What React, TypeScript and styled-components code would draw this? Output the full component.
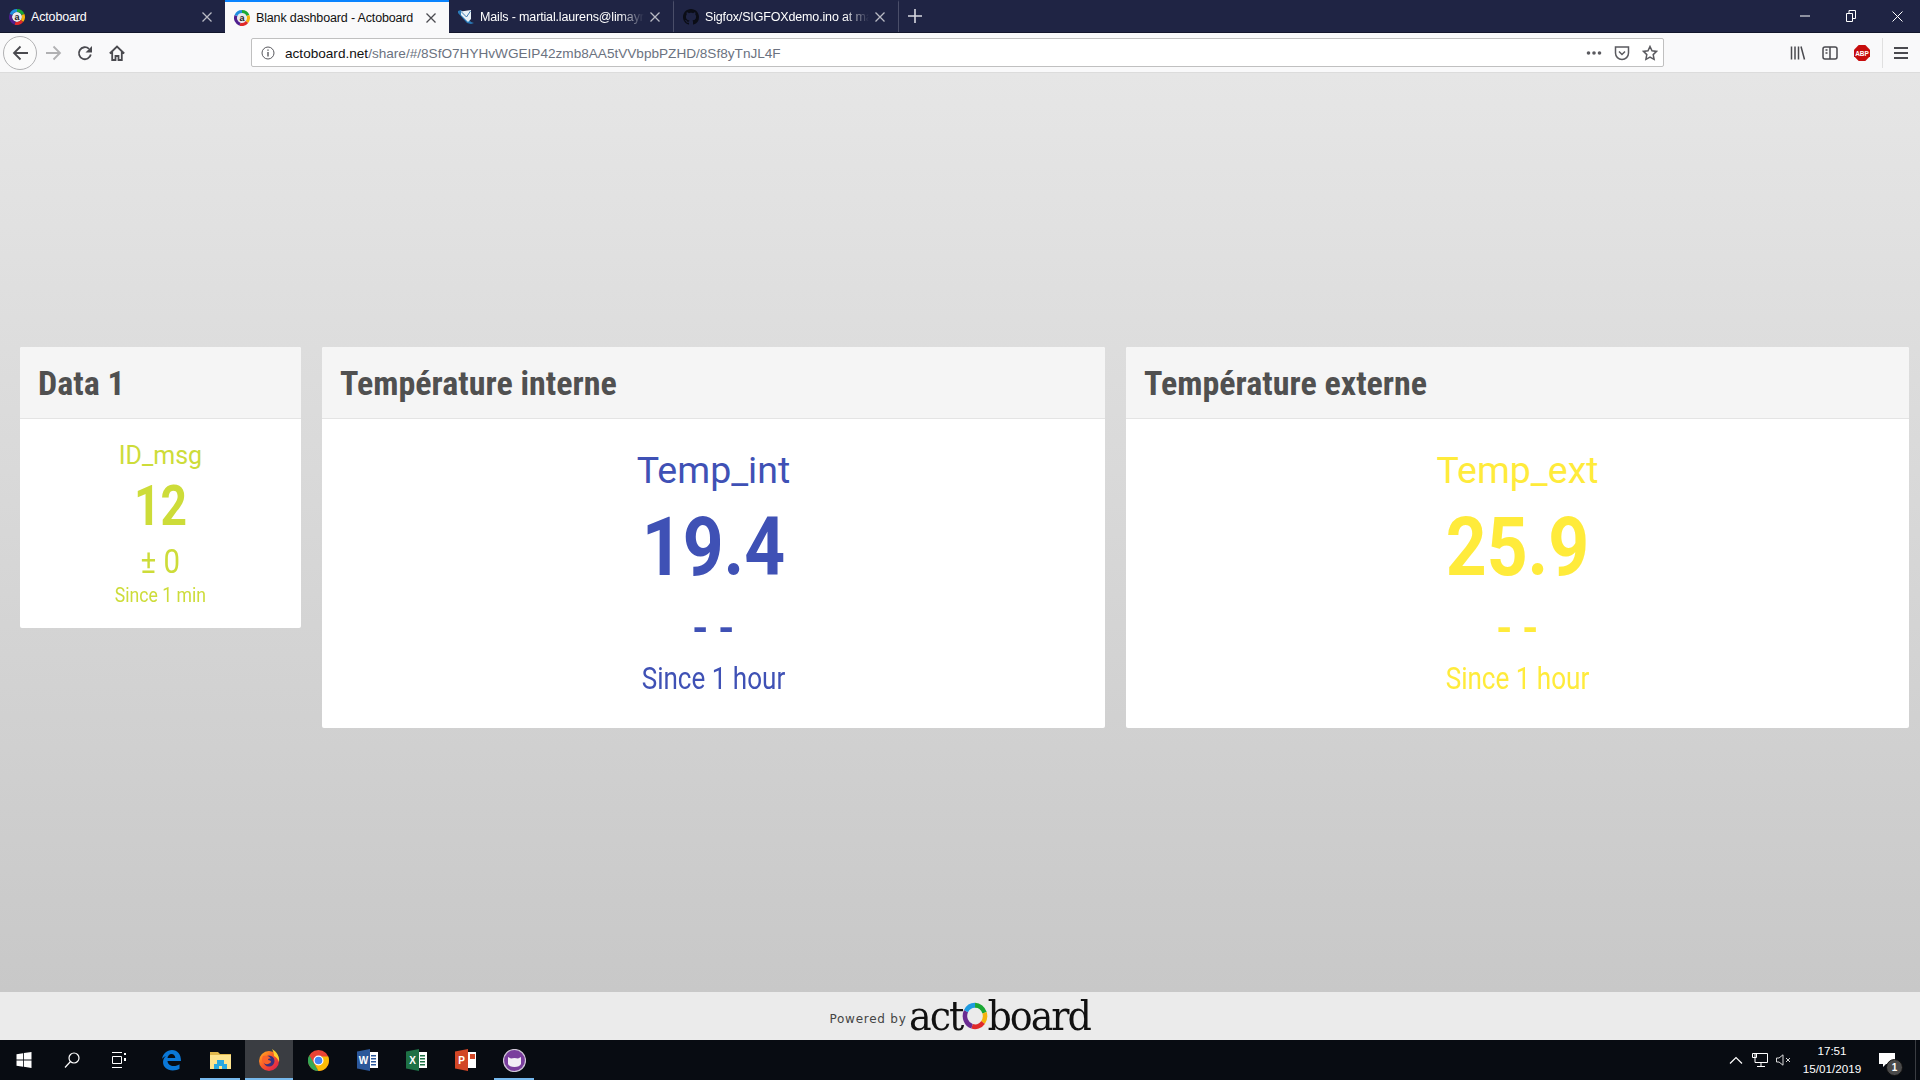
import React from 'react';
import styled, { createGlobalStyle } from 'styled-components';

const Global = createGlobalStyle`
  html, body { margin: 0; padding: 0; height: 1080px; overflow: hidden; }
  #root { height: 1080px; }
  * { box-sizing: border-box; }
`;

const Screen = styled.div`
  width: 1920px; height: 1080px; display: flex; flex-direction: column;
  font-family: Roboto, "Liberation Sans", sans-serif; overflow: hidden;
`;

/* ---------- browser chrome ---------- */
const TabStrip = styled.div`
  height: 33px; flex: none; background: #1f2444; display: flex; align-items: stretch;
  border-bottom: 1px solid #12162c;
`;
const Tab = styled.div<{ $active?: boolean; $w: number; $sep?: boolean }>`
  width: ${p => p.$w}px; flex: none; display: flex; align-items: center; padding: 0 8px 0 9px;
  gap: 6px; font-size: 12.5px; letter-spacing: -0.15px; white-space: nowrap; overflow: hidden;
  font-family: "Liberation Sans", sans-serif;
  color: ${p => (p.$active ? '#111' : '#fff')};
  background: ${p => (p.$active ? '#f9f9fa' : 'transparent')};
  border-top: 2px solid ${p => (p.$active ? '#0a84ff' : 'transparent')};
  border-right: ${p => (p.$sep ? '1px solid #4a4e69' : 'none')};
  height: ${p => (p.$active ? '33px' : '32px')};
`;
const TabLabel = styled.span<{ $fade?: boolean }>`
  flex: 1; overflow: hidden; min-width: 0;
  ${p => p.$fade && 'mask-image: linear-gradient(to right, #000 85%, transparent);'}
`;
const FavSvg = styled.svg`
  flex: none;
`;
const CloseSvg = styled.svg`
  flex: none; margin-right: 5px;
`;
const NewTab = styled.div`
  width: 32px; display: flex; align-items: center; justify-content: center; margin-right: auto;
`;
const WinButtons = styled.div`
  display: flex; align-items: center;
`;
const WinBtn = styled.div`
  width: 46px; height: 32px; display: flex; align-items: center; justify-content: center;
`;

const Toolbar = styled.div`
  height: 40px; flex: none; background: #f9f9fa; display: flex; align-items: center;
  border-bottom: 1px solid #dcdcdc;
`;
const BackCircle = styled.div`
  width: 34px; height: 34px; margin-left: 3px; border-radius: 50%; border: 1px solid #b1b1b3;
  background: #fbfbfb; display: flex; align-items: center; justify-content: center; flex: none;
`;
const NavIcon = styled.div<{ $ml: number }>`
  margin-left: ${p => p.$ml}px; width: 18px; height: 18px; flex: none; display: flex;
  align-items: center; justify-content: center;
`;
const UrlBar = styled.div`
  margin-left: 125px; width: 1413px; height: 29px; flex: none; background: #fff;
  border: 1px solid #c0c0c0; border-radius: 2px; display: flex; align-items: center;
  padding: 1px 5px 0 9px; font-family: "Liberation Sans", sans-serif; font-size: 13.6px;
`;
const UrlHost = styled.span`
  color: #111; margin-left: 10px;
`;
const UrlPath = styled.span`
  color: #6b7280; flex: 1;
`;
const UrlIcons = styled.div`
  display: flex; align-items: center; gap: 12px;
`;
const RightTools = styled.div`
  display: flex; align-items: center; flex: 1; padding-left: 125px;
`;
const ToolSlot = styled.div`
  width: 18px; height: 18px; margin-right: 14px; display: flex; align-items: center; justify-content: center; flex: none;
`;
const ToolDivider = styled.div`
  width: 1px; height: 30px; background: #e0e0e0; margin: 0 9px 0 -3px; flex: none;
`;

/* ---------- dashboard ---------- */
const Page = styled.main`
  flex: 1; min-height: 0; background: linear-gradient(to bottom, #e6e6e6, #c8c8c8);
  padding: 274px 11px 0 20px; display: flex; align-items: flex-start; gap: 21px;
`;
const Card = styled.section<{ $w: number; $h: number }>`
  width: ${p => p.$w}px; height: ${p => p.$h}px; flex: none; background: #fff; border-radius: 2px;
  overflow: hidden; display: flex; flex-direction: column;
`;
const CardHead = styled.header`
  height: 72px; flex: none; background: #f5f5f5; border-bottom: 1px solid #e4e4e4;
  display: flex; align-items: center; padding-left: 18px;
`;
const CardTitle = styled.h2`
  margin: 0; font-family: Roboto, sans-serif; font-stretch: condensed;
  font-weight: 700; font-size: 34px; color: #505050; white-space: nowrap;
`;
const CardBody = styled.div<{ $color: string }>`
  flex: 1; display: flex; flex-direction: column; align-items: center; color: ${p => p.$color};
`;
const Line = styled.div<{ $size: number; $top: number; $sx?: number; $weight?: number }>`
  font-size: ${p => p.$size}px; line-height: 1; margin-top: ${p => p.$top}px;
  font-weight: ${p => p.$weight ?? 400}; transform: scaleX(${p => p.$sx ?? 1}); white-space: pre;
`;

/* ---------- footer ---------- */
const Footer = styled.footer`
  height: 48px; flex: none; background: #ebebeb; display: flex; align-items: center; justify-content: center; gap: 2px;
`;
const Powered = styled.span`
  font-family: "DejaVu Sans", sans-serif; font-size: 12px; letter-spacing: 0.75px; color: #444; margin-top: 6px;
`;
const Logo = styled.span`
  font-family: "DejaVu Serif", "Liberation Serif", serif; font-size: 41px; color: #111; letter-spacing: -2.2px;
  display: inline-flex; align-items: baseline; line-height: 1; transform: scaleX(0.93); transform-origin: left center; width: 182px;
`;
const LogoRing = styled.svg`
  width: 28px; height: 28px; margin: 0 -1px -2px 0; flex: none;
`;

/* ---------- taskbar ---------- */
const Taskbar = styled.div`
  height: 40px; flex: none; background: #080c12; display: flex; align-items: stretch; color: #fff;
`;
const TaskItem = styled.div<{ $active?: boolean; $open?: boolean; $after?: number }>`
  width: 48px; margin-right: ${p => p.$after ?? 1}px; flex: none; display: flex; align-items: center; justify-content: center;
  position: relative; background: ${p => (p.$active ? '#3a3d42' : 'transparent')};
  &::after {
    content: ''; position: absolute; bottom: 0; height: 2px; background: #76b9ed;
    left: ${p => (p.$active ? 0 : 4)}px; right: ${p => (p.$active ? 0 : 4)}px;
    display: ${p => (p.$open ? 'block' : 'none')};
  }
`;
const Tray = styled.div`
  margin-left: auto; display: flex; align-items: center;
`;
const TrayIcon = styled.svg<{ $mr?: number }>`
  margin-right: ${p => p.$mr ?? 0}px; flex: none;
`;
const Clock = styled.div`
  width: 62px; margin-left: 10px; text-align: center; font-family: "Liberation Sans", sans-serif;
  font-size: 11.7px; line-height: 18px; color: #fff; white-space: nowrap;
`;
const Notif = styled.div`
  width: 44px; height: 40px; position: relative; display: flex; align-items: center; justify-content: center; margin: 0 6px 0 2px;
`;
const NotifBadge = styled.span`
  position: absolute; left: 21px; top: 19px; width: 17px; height: 17px; border-radius: 50%;
  background: #4a4a4a; border: 1px solid #111; color: #fff; font-size: 10px; font-weight: 700;
  display: flex; align-items: center; justify-content: center; font-family: "Liberation Sans", sans-serif;
`;
const CornerEdge = styled.div`
  width: 1px; align-self: stretch; background: #3a3d42; margin-right: 4px;
`;

const Ring = ({ size = 16 }: { size?: number }) => (
  <FavSvg width={size} height={size} viewBox="0 0 16 16">
    <circle cx="8" cy="8" r="5" fill="#e8e8ee" />
    <g fill="none" strokeWidth="3">
      <path d="M8 1.500A6.500 6.500 0 0 1 14 5.500" stroke="#1aa834" />
      <path d="M14 5.500A6.500 6.500 0 0 1 13 12" stroke="#f4b30c" />
      <path d="M13 12A6.500 6.500 0 0 1 6 14.200" stroke="#e02a2a" />
      <path d="M6 14.200A6.500 6.500 0 0 1 2 5.500" stroke="#4f1f8f" />
      <path d="M2 5.500A6.500 6.500 0 0 1 8 1.500" stroke="#1f8fe0" />
    </g>
    <text x="8" y="11" textAnchor="middle" fontSize="9" fontFamily="Liberation Sans" fontWeight="700" fill="#222">a</text>
  </FavSvg>
);
const Close = ({ c }: { c: string }) => (
  <CloseSvg width="10" height="10" viewBox="0 0 10 10">
    <path d="M.5.5l9 9M9.500.5l-9 9" stroke={c} strokeWidth="1.300" />
  </CloseSvg>
);
const MailIcon = () => (
  <FavSvg width="16" height="16" viewBox="0 0 16 16">
    <path d="M0 2l3-1 10 12 3 1-3 1-4-1L0 4z" fill="#2a7ab8" />
    <path d="M3 2.500l10-1.500v9l-3 3-7-7z" fill="#e8f1f7" />
    <path d="M3.500 3l5 5 4-6" fill="none" stroke="#2a6ea8" strokeWidth=".9" />
  </FavSvg>
);
const GithubIcon = () => (
  <FavSvg width="16" height="16" viewBox="0 0 16 16">
    <path fill="#0b0d16" d="M8 0C3.580 0 0 3.580 0 8c0 3.540 2.290 6.530 5.470 7.590.4.070.55-.17.55-.38 0-.19-.01-.82-.01-1.490-2.010.37-2.530-.49-2.690-.94-.09-.23-.48-.94-.82-1.130-.28-.15-.68-.52-.01-.53.63-.01 1.080.58 1.230.82.720 1.210 1.870.87 2.330.66.070-.52.28-.87.51-1.070-1.780-.2-3.640-.89-3.640-3.950 0-.87.31-1.590.82-2.150-.08-.2-.36-1.020.08-2.120 0 0 .67-.21 2.200.82.64-.18 1.320-.27 2-.27s1.360.09 2 .27c1.530-1.040 2.200-.82 2.200-.82.44 1.100.16 1.920.08 2.120.51.56.82 1.270.82 2.150 0 3.070-1.870 3.750-3.650 3.950.29.25.54.73.54 1.480 0 1.070-.01 1.930-.01 2.200 0 .21.15.46.55.38A8.010 8.010 0 0 0 16 8c0-4.420-3.580-8-8-8z" />
  </FavSvg>
);

const g = { fill: 'none', stroke: '#4a4a4f', strokeWidth: 1.8 } as const;

const Windows = () => (
  <svg width="16" height="16" viewBox="0 0 15 16"><path fill="#fff" d="M0 2.200 6.600 1.200V7.500H0zM7.400 1.100 15 0v7.500H7.400zM0 8.400h6.600v6.300L0 13.800zM7.400 8.400H15V16l-7.600-1.200z" /></svg>
);
const SearchI = () => (
  <svg width="16" height="17" viewBox="0 0 16 17" fill="none" stroke="#fff" strokeWidth="1.200"><circle cx="10" cy="6" r="5" /><path d="M6.500 9.500 1 15.500" /></svg>
);
const TaskView = () => (
  <svg width="16" height="16" viewBox="0 0 16 16" fill="none" stroke="#fff" strokeWidth="1"><path d="M0 .5h10M0 15.500h10M.5 4.500h9v7h-9z" /><path d="M13 1v2M13 6v3" strokeWidth="2" /></svg>
);
const Edge = () => (
  <svg width="20" height="21" viewBox="0 0 20 21"><path fill="#0a78d7" d="M1 9C2 3.500 6 0 11 0c5.500 0 9 4 9 11H6.500c.3 3.500 3 5 6 5 2.500 0 4.500-.8 6-1.800v4.600c-1.800 1-4 1.600-6.800 1.600-5.700 0-9.700-3.500-9.700-8.400C2 10 3 7.500 5 6 3.500 6.500 2 7.500 1 9zM6.500 8h7.800c0-2.200-1.500-4-3.800-4C8.300 4 6.800 5.800 6.500 8z" /></svg>
);
const Folder = () => (
  <svg width="21" height="19" viewBox="0 0 21 19"><path fill="#e0b84c" d="M0 1h8l2 2h11v15H0z" /><path fill="#fde48e" d="M0 4h21v14H0z" /><path fill="#29a8e0" d="M4 18v-5h3V9h7v4h3v5h-5v-3H9v3z" /></svg>
);
const Firefox = () => (
  <svg width="22" height="22" viewBox="0 0 22 22"><defs><linearGradient id="ff" x1="0" y1="0" x2="1" y2="1"><stop offset="0" stopColor="#ffb81e" /><stop offset=".5" stopColor="#f9522a" /><stop offset="1" stopColor="#d4145a" /></linearGradient></defs><circle cx="11" cy="12" r="10" fill="url(#ff)" /><path fill="#ffcf2e" d="M14 0c5 3 8 8 7 13-1-3-3-5-5-6 0-3-1-5-2-7z" /><circle cx="11" cy="12" r="5.500" fill="#39307e" /><path fill="#f9622a" d="M5 7c3-1 7 0 8 3-2-1-3 0-3 1 2 0 3 1 3 2-2 3-7 3-9-1 0-2 0-3 1-5z" /></svg>
);
const Chrome = () => (
  <svg width="21" height="21" viewBox="0 0 21 21"><circle cx="10.500" cy="10.500" r="10.500" fill="#ea4335" /><path fill="#34a853" d="M1.400 5.200 6 13.500l4.500 7.500A10.500 10.500 0 0 1 1.400 5.200z" /><path fill="#fbbc05" d="M20.300 6.500H10.500l-4 7 4 7.500c6 0 10.500-4.700 10.500-10.500 0-1.400-.3-2.800-.7-4z" /><circle cx="10.500" cy="10.500" r="5" fill="#fff" /><circle cx="10.500" cy="10.500" r="3.800" fill="#4285f4" /></svg>
);
const Office = ({ bg, letter, pageLines }: { bg: string; letter: string; pageLines?: boolean }) => (
  <svg width="21" height="22" viewBox="0 0 21 22">
    <rect x="7" y="3" width="14" height="16" fill="#fff" />
    {pageLines !== false && [6, 9, 12, 15].map(y => <rect key={y} x="14" y={y} width="5" height="1.500" fill={bg} />)}
    {pageLines === false && <path fill={bg} d="M15 5h5v5h-5z" />}
    <path fill={bg} d="M0 2.500 13 0v22L0 19.500z" />
    <text x="6.500" y="15" textAnchor="middle" fill="#fff" fontSize="10" fontWeight="700" fontFamily="Liberation Sans">{letter}</text>
  </svg>
);
const CatApp = () => (
  <svg width="23" height="23" viewBox="0 0 23 23"><circle cx="11.500" cy="11.500" r="11" fill="#7a3e9d" stroke="#cfc6d6" strokeWidth="1.200" /><path fill="#f2eef5" d="M5 8l3 1.500c2-.7 5-.7 7 0L18 8v7c-1 2-3 3-6.500 3S6 17 5 15z" /></svg>
);

const SMALL = {
  label: { $size: 25, $top: 24 },
  value: { $size: 55, $top: 11, $sx: 0.84, $weight: 700 },
  delta: { $size: 33, $top: 11, $sx: 0.89 },
  since: { $size: 21, $top: 7, $sx: 0.84 },
};
const LARGE = {
  label: { $size: 37.5, $top: 33 },
  value: { $size: 82, $top: 16, $sx: 0.87, $weight: 700 },
  delta: { $size: 50, $top: 15, $sx: 0.88, $weight: 500 },
  since: { $size: 31, $top: 10, $sx: 0.84 },
};

function Dash({ title, w, h, color, label, value, delta, since, large }: {
  title: string; w: number; h: number; color: string; label: string; value: string; delta: string; since: string; large?: boolean;
}) {
  const s = large ? LARGE : SMALL;
  return (
    <Card $w={w} $h={h}>
      <CardHead><CardTitle>{title}</CardTitle></CardHead>
      <CardBody $color={color}>
        <Line {...s.label}>{label}</Line>
        <Line {...s.value}>{value}</Line>
        <Line {...s.delta}>{delta}</Line>
        <Line {...s.since}>{since}</Line>
      </CardBody>
    </Card>
  );
}

export default function App() {
  return (
    <Screen>
      <Global />
      <TabStrip>
        <Tab $w={225}><Ring /><TabLabel>Actoboard</TabLabel><Close c="#b9bac4" /></Tab>
        <Tab $w={224} $active><Ring /><TabLabel>Blank dashboard - Actoboard</TabLabel><Close c="#4a4a4f" /></Tab>
        <Tab $w={225} $sep><MailIcon /><TabLabel $fade>Mails - martial.laurens@limayrac.fr</TabLabel><Close c="#b9bac4" /></Tab>
        <Tab $w={225} $sep><GithubIcon /><TabLabel $fade>Sigfox/SIGFOXdemo.ino at master</TabLabel><Close c="#b9bac4" /></Tab>
        <NewTab><svg width="14" height="14" viewBox="0 0 14 14"><path d="M7 0v14M0 7h14" stroke="#d8d8e0" strokeWidth="1.600" /></svg></NewTab>
        <WinButtons>
          <WinBtn><svg width="10" height="2"><path d="M0 1h10" stroke="#fff" /></svg></WinBtn>
          <WinBtn><svg width="10" height="12" viewBox="0 0 10 12" fill="none" stroke="#fff"><path d="M.5 3.500h6v8h-6zM3 3.500v-3h6.500v8H6.500" /></svg></WinBtn>
          <WinBtn><svg width="11" height="11"><path d="M.5.5l10 10M10.500.5l-10 10" stroke="#fff" /></svg></WinBtn>
        </WinButtons>
      </TabStrip>
      <Toolbar>
        <BackCircle><svg width="17" height="16" viewBox="0 0 17 16" {...g}><path d="M16 8H2M8.500 1.500 2 8l6.500 6.500" /></svg></BackCircle>
        <NavIcon $ml={7}><svg width="17" height="16" viewBox="0 0 17 16" fill="none" stroke="#b1b1b3" strokeWidth="1.800"><path d="M1 8h14M8.500 1.500 15 8l-6.500 6.500" /></svg></NavIcon>
        <NavIcon $ml={14}><svg width="16" height="16" viewBox="0 0 16 16" {...g}><path d="M13.800 9.500A6 6 0 1 1 12 3.800" /><path fill="#4a4a4f" stroke="none" d="M15 1v6.500H8.500z" /></svg></NavIcon>
        <NavIcon $ml={14}><svg width="16" height="16" viewBox="0 0 16 16" {...g}><path d="M.8 8.500 8 1.500l7.200 7M3.200 6.500V15h3.300v-4h3v4h3.300V6.500" /></svg></NavIcon>
        <UrlBar>
          <svg width="14" height="14" viewBox="0 0 14 14" fill="none" stroke="#5a5a5f"><circle cx="7" cy="7" r="6" /><path d="M7 6v4.500M7 3.500v1.300" strokeWidth="1.400" /></svg>
          <UrlHost>actoboard.net</UrlHost>
          <UrlPath>/share/#/8SfO7HYHvWGEIP42zmb8AA5tVVbpbPZHD/8Sf8yTnJL4F</UrlPath>
          <UrlIcons>
            <svg width="16" height="6" viewBox="0 0 16 6" fill="#5a5a5f"><circle cx="2.500" cy="3" r="1.800" /><circle cx="8" cy="3" r="1.800" /><circle cx="13.500" cy="3" r="1.800" /></svg>
            <svg width="16" height="16" viewBox="0 0 16 16" fill="none" stroke="#5a5a5f" strokeWidth="1.500"><path d="M1.500 2h13v6a6.500 6.500 0 0 1-13 0z" /><path d="M5 6.500 8 9.500l3-3" /></svg>
            <svg width="16" height="16" viewBox="0 0 16 16" fill="none" stroke="#5a5a5f" strokeWidth="1.500"><path d="M8 1.500l2 4.300 4.600.6-3.400 3.200.9 4.700L8 12l-4.100 2.300.9-4.700L1.400 6.400 6 5.800z" /></svg>
          </UrlIcons>
        </UrlBar>
        <RightTools>
          <ToolSlot><svg width="16" height="16" viewBox="0 0 16 16" stroke="#4a4a4f" strokeWidth="1.500"><path d="M1.500 1.500v13M5 1.500v13M8.500 1.500v13M11 1.500l3.500 13" /></svg></ToolSlot>
          <ToolSlot><svg width="16" height="16" viewBox="0 0 16 16" fill="none" stroke="#4a4a4f" strokeWidth="1.500"><rect x="1" y="2" width="14" height="12" rx="2" /><path d="M8 2v12M3.500 5h2M3.500 8h2" /></svg></ToolSlot>
          <ToolSlot><svg width="16" height="16" viewBox="0 0 16 16"><path fill="#c70d0d" d="M4.700 0h6.600L16 4.700v6.600L11.300 16H4.700L0 11.300V4.700z" /><text x="8" y="10.500" textAnchor="middle" fill="#fff" fontSize="6.500" fontWeight="700" fontFamily="Liberation Sans">ABP</text></svg></ToolSlot>
          <ToolDivider />
          <ToolSlot><svg width="14" height="14" viewBox="0 0 14 14" stroke="#4a4a4f" strokeWidth="2"><path d="M0 2h14M0 7h14M0 12h14" /></svg></ToolSlot>
        </RightTools>
      </Toolbar>
      <Page>
        <Dash title="Data 1" w={281} h={281} color="#cddc39" label="ID_msg" value="12" delta="± 0" since="Since 1 min" />
        <Dash title="Température interne" w={783} h={381} color="#3f51b5" label="Temp_int" value="19.4" delta="- -" since="Since 1 hour" large />
        <Dash title="Température externe" w={783} h={381} color="#ffeb3b" label="Temp_ext" value="25.9" delta="- -" since="Since 1 hour" large />
      </Page>
      <Footer>
        <Powered>Powered by</Powered>
        <Logo>act<LogoRing viewBox="0 0 26 26">
            <g fill="none" strokeWidth="4.500">
              <path d="M13 3A10 10 0 0 1 22.500 10" stroke="#1aa834" />
              <path d="M22.500 10A10 10 0 0 1 21 19" stroke="#f4b30c" />
              <path d="M21 19A10 10 0 0 1 10 22.500" stroke="#e02a2a" />
              <path d="M10 22.500A10 10 0 0 1 4 8.500" stroke="#6a2b91" />
              <path d="M4 8.500A10 10 0 0 1 13 3" stroke="#1f9be0" />
            </g>
          </LogoRing>board</Logo>
      </Footer>
      <Taskbar>
        <TaskItem $after={0}><Windows /></TaskItem>
        <TaskItem $after={0}><SearchI /></TaskItem>
        <TaskItem $after={3}><TaskView /></TaskItem>
        <TaskItem><Edge /></TaskItem>
        <TaskItem $open><Folder /></TaskItem>
        <TaskItem $active $open><Firefox /></TaskItem>
        <TaskItem><Chrome /></TaskItem>
        <TaskItem><Office bg="#2b579a" letter="W" /></TaskItem>
        <TaskItem><Office bg="#1e7145" letter="X" /></TaskItem>
        <TaskItem><Office bg="#d24726" letter="P" pageLines={false} /></TaskItem>
        <TaskItem $open><CatApp /></TaskItem>
        <Tray>
          <TrayIcon $mr={9} width="14" height="8" viewBox="0 0 14 8" fill="none" stroke="#fff" strokeWidth="1.200"><path d="M1 7.500 7 1.500l6 6" /></TrayIcon>
          <TrayIcon $mr={8} width="16" height="14" viewBox="0 0 16 14" fill="none" stroke="#fff"><path d="M3 .5h12.500v9H3zM.5 .5h4v4h-4zM9 9.500v3.500M5 13.500h8" /></TrayIcon>
          <TrayIcon width="15" height="12" viewBox="0 0 15 12" fill="none" stroke="#d8d8d8"><path d="M.5 4h2.500L7 .8v10.400L3 8H.5zM10 4l4 4M14 4l-4 4" /></TrayIcon>
          <Clock>17:51<br />15/01/2019</Clock>
          <Notif>
            <svg width="16" height="14" viewBox="0 0 16 14"><path fill="#fff" d="M0 0h16v11H7l-3 3v-3H0z" /></svg>
            <NotifBadge>1</NotifBadge>
          </Notif>
          <CornerEdge />
        </Tray>
      </Taskbar>
    </Screen>
  );
}
